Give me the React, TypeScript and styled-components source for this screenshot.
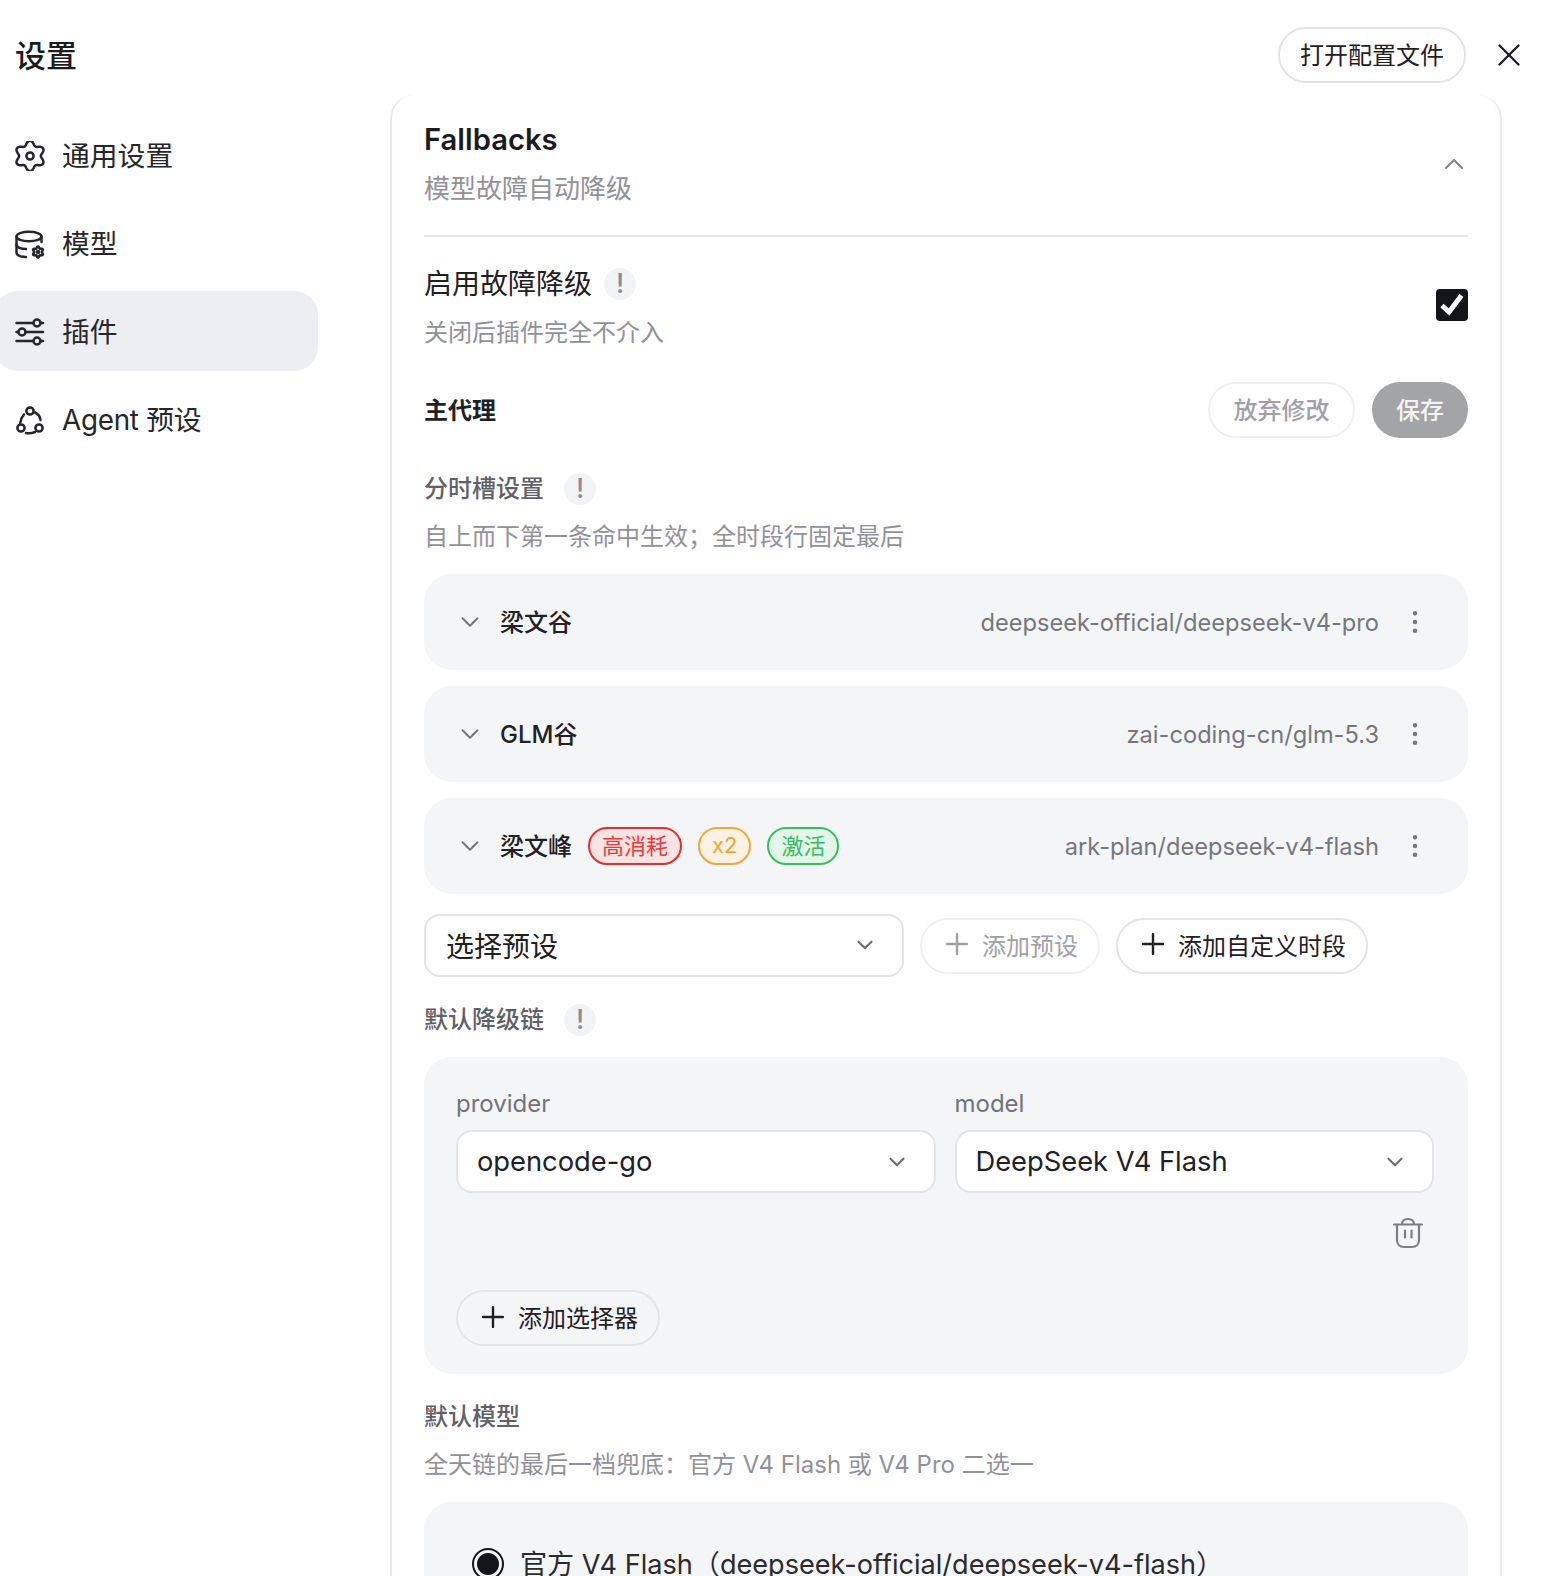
import React from 'react';
import styled, { createGlobalStyle } from 'styled-components';
import { ChevronDown, ChevronUp, EllipsisVertical, Plus, X } from 'lucide-react';

const GlobalStyle = createGlobalStyle`
  html, body {
    margin: 0;
    padding: 0;
    height: 1576px;
    overflow: hidden;
    background: #fff;
  }
  body {
    font-family: Inter, 'Noto Sans CJK SC', sans-serif;
    color: #1b1c1f;
    -webkit-font-smoothing: antialiased;
  }
  * {
    box-sizing: border-box;
  }
`;

// 6-lobed gear outline, same shape the sidebar uses
const gearPath = (cx: number, cy: number, base: number, amp: number) => {
  const pts: string[] = [];
  for (let i = 0; i < 120; i++) {
    const t = (i / 120) * Math.PI * 2;
    const r = base + amp * Math.cos(6 * t);
    const x = cx + r * Math.sin(t);
    const y = cy - r * Math.cos(t);
    pts.push(`${i === 0 ? 'M' : 'L'}${x.toFixed(2)} ${y.toFixed(2)}`);
  }
  return pts.join(' ') + ' Z';
};

const IconSvg = styled.svg`
  width: 30px;
  height: 30px;
  flex: none;
  margin-top: 3px;
  fill: none;
  stroke: currentColor;
  stroke-width: 2.5;
  stroke-linecap: round;
  stroke-linejoin: round;
`;

const GearIcon = () => (
  <IconSvg viewBox="0 0 30 30">
    <path d={gearPath(15, 15, 13, 2.2)} />
    <circle cx="15" cy="15" r="3.6" />
  </IconSvg>
);

const DbIcon = () => (
  <IconSvg viewBox="0 0 30 30">
    <ellipse cx="14" cy="7.500" rx="12.500" ry="4.800" />
    <path d="M26.500 7.500V13" />
    <path d="M1.500 7.500V23.500c0 2.600 4.400 4.300 9.500 4.600" />
    <path d="M1.500 15.500c0 2.600 4.400 4.300 9.500 4.600" />
    <path d={gearPath(23, 23, 4.6, 0.9)} />
    <circle cx="23" cy="23" r="1" />
  </IconSvg>
);

const SliderIcon = () => (
  <IconSvg viewBox="0 0 30 30">
    <path d="M1.500 6H18.500M25.500 6H28" />
    <circle cx="22" cy="6" r="3.500" />
    <path d="M1.500 15H3.500M10.500 15H28" />
    <circle cx="7" cy="15" r="3.500" />
    <path d="M1.500 24H18.500M25.500 24H28" />
    <circle cx="22" cy="24" r="3.500" />
  </IconSvg>
);

const AgentIcon = () => (
  <IconSvg viewBox="0 0 30 30">
    <circle cx="15" cy="6" r="3.600" />
    <circle cx="6" cy="23" r="3.600" />
    <circle cx="24" cy="23" r="3.600" />
    <path d="M20 7.500c3 1.400 5 4 5.500 7.500" />
    <path d="M9 9.500C6.800 12 5.500 14.800 5.200 18" />
    <path d="M11 28c3 .6 6 .3 9-1" />
  </IconSvg>
);

const TrashIcon = () => (
  <TrashSvg viewBox="0 0 30 32">
    <path d="M1 7.500H29" />
    <path d="M9 7c0-3 2.500-5 6-5s6 2 6 5" />
    <path d="M4 8V23c0 4.500 3 7 7 7h8c4 0 7-2.500 7-7V8" />
    <path d="M12 13.500V20.500M18.500 13.500V20.500" />
  </TrashSvg>
);

const Page = styled.div`
  width: 1545px;
  height: 1576px;
  overflow: hidden;
`;

const Header = styled.header`
  display: flex;
  align-items: center;
  justify-content: space-between;
  height: 95px;
  padding: 14px 17px 0 15px;
`;

const Title = styled.h1`
  margin: 0;
  padding-top: 2px;
  font-size: 31px;
  font-weight: 500;
  line-height: 40px;
`;

const HeaderActions = styled.div`
  display: flex;
  align-items: center;
  gap: 24px;
  > svg {
    width: 38px;
    height: 38px;
    stroke-width: 1.5;
  }
`;

const PillButton = styled.button<{ $tone?: 'normal' | 'muted' }>`
  display: inline-flex;
  align-items: center;
  gap: 8px;
  height: 56px;
  padding: 0 20px 3px;
  border: 2px solid ${p => (p.$tone === 'muted' ? '#f0f0f1' : '#e4e4e6')};
  border-radius: 28px;
  background: transparent;
  font-family: inherit;
  font-size: 24px;
  color: ${p => (p.$tone === 'muted' ? '#9fa1a5' : '#1f2023')};
  svg {
    width: 34px;
    height: 34px;
    margin-left: -2px;
    stroke-width: 1.7;
  }
`;

const DiscardButton = styled(PillButton)`
  padding: 0 23.5px 3px;
  font-weight: 500;
`;

const SaveButton = styled.button`
  height: 56px;
  padding: 0 24px 3px;
  border: 0;
  border-radius: 28px;
  background: #a3a4a6;
  font-family: inherit;
  font-size: 24px;
  font-weight: 500;
  color: #f4f4f4;
`;

const Body = styled.div`
  display: flex;
  align-items: flex-start;
`;

const Sidebar = styled.nav`
  display: flex;
  flex-direction: column;
  gap: 8px;
  flex: none;
  width: 318px;
  padding-top: 20px;
`;

const NavItem = styled.div<{ $active?: boolean; $tight?: boolean }>`
  display: flex;
  align-items: center;
  gap: 17px;
  height: 80px;
  margin-left: -6px;
  padding: 0 0 2px 21px;
  border-radius: 24px;
  background: ${p => (p.$active ? '#edeef1' : 'transparent')};
  font-size: 27.8px;
  letter-spacing: ${p => (p.$tight ? '-0.25px' : '0')};
  color: #26272a;
`;

const Card = styled.main`
  flex: none;
  width: 1112px;
  height: 1600px;
  margin-left: 72px;
  padding: 25px 32px 0;
  border: 2px solid #e7e9f1;
  border-top: 0;
  border-radius: 24px;
`;

const CardHead = styled.div`
  display: flex;
  align-items: center;
  justify-content: space-between;
  padding-bottom: 28px;
  border-bottom: 2px solid #e8e8ea;
  svg {
    width: 32px;
    height: 32px;
    margin-right: -2px;
    color: #85878c;
    stroke-width: 1.6;
  }
`;

const CardTitle = styled.h2`
  margin: 0 0 11px;
  font-size: 29.2px;
  font-weight: 600;
  line-height: 40px;
`;

const Hint = styled.div<{ $mt?: number }>`
  margin-top: ${p => p.$mt ?? 0}px;
  font-size: 24px;
  line-height: 36px;
  color: #909297;
`;

const CardSub = styled(Hint)`
  font-size: 26px;
`;

const ToggleRow = styled.div`
  display: flex;
  align-items: center;
  justify-content: space-between;
  margin-top: 27px;
`;

const ToggleLabel = styled.div`
  display: flex;
  align-items: center;
  gap: 12px;
  font-size: 28px;
  line-height: 40px;
  color: #1f2023;
`;

const InfoDot = styled.span`
  display: inline-flex;
  align-items: center;
  justify-content: center;
  width: 32px;
  height: 32px;
  border-radius: 50%;
  background: #f2f3f5;
  font-size: 27px;
  font-weight: 500;
  color: #8b8e93;
`;

const Checkbox = styled.span`
  display: flex;
  align-items: center;
  justify-content: center;
  width: 32px;
  height: 32px;
  margin-top: -5px;
  border-radius: 4px;
  background: #141518;
  svg {
    width: 32px;
    height: 32px;
  }
`;

const AgentRow = styled.div`
  display: flex;
  align-items: center;
  justify-content: space-between;
  margin-top: 31px;
`;

const AgentName = styled.div`
  padding-bottom: 4px;
  font-size: 24px;
  font-weight: 600;
  color: #202124;
`;

const AgentActions = styled.div`
  display: flex;
  gap: 17px;
`;

const SectionHead = styled.div<{ $mt: number }>`
  display: flex;
  align-items: center;
  gap: 20px;
  min-height: 32px;
  margin-top: ${p => p.$mt}px;
  font-size: 24px;
  font-weight: 500;
  line-height: 36px;
  color: #5f6166;
`;

const SlotList = styled.div`
  display: flex;
  flex-direction: column;
  gap: 16px;
  margin-top: 19px;
`;

const SlotRow = styled.div`
  display: flex;
  align-items: center;
  height: 96px;
  padding: 0 38px 0 31px;
  border-radius: 28px;
  background: #f4f5f7;
  > svg {
    width: 30px;
    height: 30px;
    flex: none;
    color: #74767b;
    stroke-width: 1.6;
  }
`;

const SlotName = styled.span`
  margin: 0 16px 0 15px;
  padding-bottom: 3px;
  font-size: 24px;
  font-weight: 500;
  color: #202124;
`;

const Badges = styled.div`
  display: flex;
  gap: 16px;
`;

const tones = {
  red: { fg: '#ea3a3a', bg: '#fbe3e3', line: '#e82d2d' },
  amber: { fg: '#f0a436', bg: '#fcf2e4', line: '#f3a63b' },
  green: { fg: '#37bd5f', bg: '#e4f6e9', line: '#35c05d' },
};

const Badge = styled.span<{ $tone: keyof typeof tones }>`
  display: inline-flex;
  align-items: center;
  height: 38px;
  padding: 0 12px ${p => (p.$tone === 'amber' ? 2 : 5)}px;
  border: 2px solid ${p => tones[p.$tone].line};
  border-radius: 19px;
  background: ${p => tones[p.$tone].bg};
  font-size: 22px;
  color: ${p => tones[p.$tone].fg};
`;

const SlotModel = styled.span`
  margin-left: auto;
  margin-right: 21px;
  font-size: 23.65px;
  color: #75777c;
`;

const Toolbar = styled.div`
  display: flex;
  align-items: center;
  gap: 16px;
  margin-top: 20px;
`;

const Select = styled.div`
  display: flex;
  align-items: center;
  justify-content: space-between;
  flex: none;
  width: 480px;
  height: 63px;
  padding: 0 24px 2px 20px;
  border: 2px solid #e4e4e6;
  border-radius: 16px;
  background: #fff;
  font-size: 28px;
  color: #202124;
  svg {
    width: 26px;
    height: 26px;
    color: #6c6e73;
    stroke-width: 2;
  }
`;

const FieldSelect = styled(Select)`
  width: 100%;
  padding: 0 24px 0 19px;
  font-size: 27.3px;
`;

const Panel = styled.div<{ $mt: number }>`
  margin-top: ${p => p.$mt}px;
  padding: 29px 34px 28px 32px;
  border-radius: 28px;
  background: #f4f5f7;
`;

const FieldGrid = styled.div`
  display: grid;
  grid-template-columns: 1fr 1fr;
  column-gap: 19px;
`;

const FieldLabel = styled.div`
  margin-bottom: 8px;
  font-size: 24px;
  line-height: 36px;
  color: #717378;
`;

const TrashRow = styled.div`
  display: flex;
  justify-content: flex-end;
  margin-top: 24px;
  padding-right: 11px;
`;

const TrashSvg = styled.svg`
  width: 30px;
  height: 32px;
  fill: none;
  stroke: #7b7d82;
  stroke-width: 2.2;
  stroke-linecap: round;
  stroke-linejoin: round;
`;

const AddRow = styled.div`
  margin-top: 41px;
`;

const DefaultPanel = styled.div`
  display: flex;
  align-items: flex-start;
  gap: 16px;
  height: 110px;
  margin-top: 19px;
  padding: 46px 0 0 48px;
  border-radius: 28px;
  background: #f4f5f7;
  font-size: 27.1px;
  line-height: 34px;
  color: #2a2b2e;
`;

const Radio = styled.span`
  display: flex;
  align-items: center;
  justify-content: center;
  flex: none;
  width: 32px;
  height: 32px;
  border: 2px solid #141518;
  border-radius: 50%;
  &::after {
    content: '';
    width: 22px;
    height: 22px;
    border-radius: 50%;
    background: #141518;
  }
`;

const slots = [
  { name: '梁文谷', model: 'deepseek-official/deepseek-v4-pro' },
  { name: 'GLM谷', model: 'zai-coding-cn/glm-5.3' },
  { name: '梁文峰', model: 'ark-plan/deepseek-v4-flash', active: true },
];

const App = () => {
  return (
    <Page>
      <GlobalStyle />
      <Header>
        <Title>设置</Title>
        <HeaderActions>
          <PillButton>打开配置文件</PillButton>
          <X />
        </HeaderActions>
      </Header>
      <Body>
        <Sidebar>
          <NavItem>
            <GearIcon />
            通用设置
          </NavItem>
          <NavItem>
            <DbIcon />
            模型
          </NavItem>
          <NavItem $active>
            <SliderIcon />
            插件
          </NavItem>
          <NavItem $tight>
            <AgentIcon />
            Agent 预设
          </NavItem>
        </Sidebar>
        <Card>
          <CardHead>
            <div>
              <CardTitle>Fallbacks</CardTitle>
              <CardSub>模型故障自动降级</CardSub>
            </div>
            <ChevronUp />
          </CardHead>
          <ToggleRow>
            <div>
              <ToggleLabel>
                启用故障降级
                <InfoDot>!</InfoDot>
              </ToggleLabel>
              <Hint $mt={11}>关闭后插件完全不介入</Hint>
            </div>
            <Checkbox>
              <svg viewBox="0 0 32 32" fill="none" stroke="#fff" strokeWidth="5">
                <path d="M6 16.500l7 6.500L25.500 6.500" />
              </svg>
            </Checkbox>
          </ToggleRow>
          <AgentRow>
            <AgentName>主代理</AgentName>
            <AgentActions>
              <DiscardButton $tone="muted">放弃修改</DiscardButton>
              <SaveButton>保存</SaveButton>
            </AgentActions>
          </AgentRow>
          <SectionHead $mt={33}>
            分时槽设置
            <InfoDot>!</InfoDot>
          </SectionHead>
          <Hint $mt={12}>自上而下第一条命中生效；全时段行固定最后</Hint>
          <SlotList>
            {slots.map(slot => (
              <SlotRow key={slot.name}>
                <ChevronDown />
                <SlotName>{slot.name}</SlotName>
                {slot.active && (
                  <Badges>
                    <Badge $tone="red">高消耗</Badge>
                    <Badge $tone="amber">x2</Badge>
                    <Badge $tone="green">激活</Badge>
                  </Badges>
                )}
                <SlotModel>{slot.model}</SlotModel>
                <EllipsisVertical />
              </SlotRow>
            ))}
          </SlotList>
          <Toolbar>
            <Select>
              选择预设
              <ChevronDown />
            </Select>
            <PillButton $tone="muted">
              <Plus />
              添加预设
            </PillButton>
            <PillButton>
              <Plus />
              添加自定义时段
            </PillButton>
          </Toolbar>
          <SectionHead $mt={25}>
            默认降级链
            <InfoDot>!</InfoDot>
          </SectionHead>
          <Panel $mt={19}>
            <FieldGrid>
              <div>
                <FieldLabel>provider</FieldLabel>
                <FieldSelect>
                  opencode-go
                  <ChevronDown />
                </FieldSelect>
              </div>
              <div>
                <FieldLabel>model</FieldLabel>
                <FieldSelect>
                  DeepSeek V4 Flash
                  <ChevronDown />
                </FieldSelect>
              </div>
            </FieldGrid>
            <TrashRow>
              <TrashIcon />
            </TrashRow>
            <AddRow>
              <PillButton>
                <Plus />
                添加选择器
              </PillButton>
            </AddRow>
          </Panel>
          <SectionHead $mt={25}>默认模型</SectionHead>
          <Hint $mt={12}>全天链的最后一档兜底：官方 V4 Flash 或 V4 Pro 二选一</Hint>
          <DefaultPanel>
            <Radio />
            官方 V4 Flash（deepseek-official/deepseek-v4-flash）
          </DefaultPanel>
        </Card>
      </Body>
    </Page>
  );
};

export default App;
